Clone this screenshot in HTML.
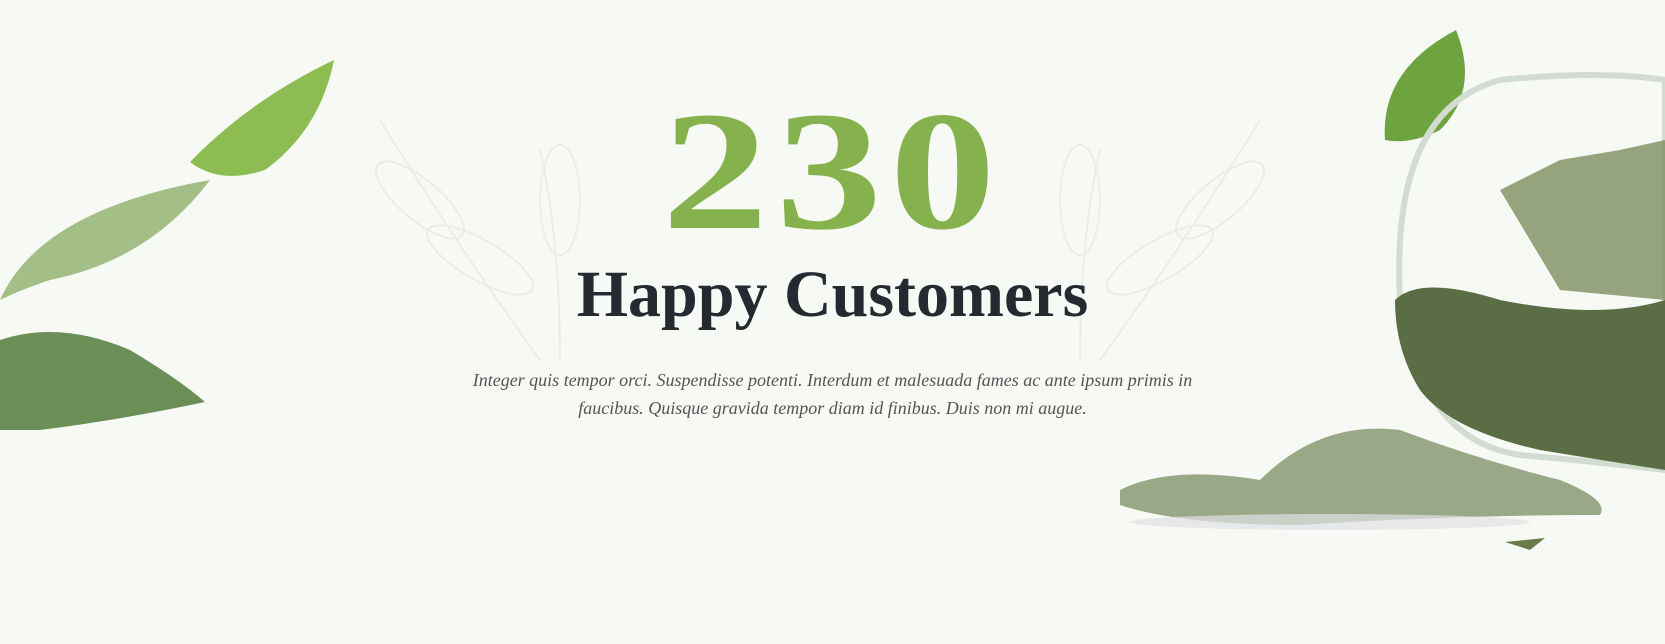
<!DOCTYPE html>
<html><head><meta charset="utf-8"><style>
html,body{margin:0;padding:0}
body{width:1665px;height:644px;background:#f7f9f5;position:relative;overflow:hidden;font-family:"Liberation Serif",serif}
.num{position:absolute;left:0;width:1665px;top:86px;text-align:center;font-size:170px;font-weight:bold;color:#86b24e;line-height:1;letter-spacing:6px;transform:scaleX(1.25);transform-origin:832px 0}
.h{position:absolute;left:0;width:1665px;top:262px;text-align:center;font-size:66px;font-weight:bold;color:#232a30;line-height:1}
.p{position:absolute;left:400px;width:865px;top:366px;text-align:center;font-size:18px;font-style:italic;color:#555;line-height:28px}
svg{position:absolute;left:0;top:0}
</style></head><body>
<svg width="1665" height="644">
<g fill="none" stroke="#eaede7" stroke-width="2">
<path d="M540 360 Q460 250 380 120"/><path d="M560 360 Q560 240 540 150"/><path d="M1100 360 Q1180 250 1260 120"/><path d="M1080 360 Q1080 240 1100 150"/>
<ellipse cx="420" cy="200" rx="55" ry="20" transform="rotate(40 420 200)"/><ellipse cx="480" cy="260" rx="60" ry="20" transform="rotate(30 480 260)"/>
<ellipse cx="1220" cy="200" rx="55" ry="20" transform="rotate(-40 1220 200)"/><ellipse cx="1160" cy="260" rx="60" ry="20" transform="rotate(-30 1160 260)"/>
<ellipse cx="560" cy="200" rx="20" ry="55"/><ellipse cx="1080" cy="200" rx="20" ry="55"/>
</g>
<path d="M190 162 Q250 100 334 60 Q320 130 265 170 Q220 185 190 162Z" fill="#8dbd52"/>
<path d="M0 300 Q40 210 210 180 Q150 260 50 280 Q20 290 0 300Z" fill="#a3be86"/>
<path d="M0 340 Q60 320 130 350 Q180 380 205 402 Q120 420 40 430 L0 430Z" fill="#6c8f57"/>
<path d="M1385 140 Q1380 70 1456 30 Q1480 90 1440 130 Q1410 145 1385 140Z" fill="#6da440"/>
<path d="M1400 300 Q1390 110 1500 80 Q1600 70 1665 80 L1665 470 Q1580 460 1520 455 Q1420 440 1400 300Z" fill="none" stroke="#d3dcd0" stroke-width="6"/>
<path d="M1500 190 L1560 160 L1620 150 L1665 140 L1665 300 L1560 290 Z" fill="#7c8f5e" opacity="0.8"/>
<path d="M1395 300 Q1420 275 1500 300 Q1600 320 1665 300 L1665 470 Q1600 460 1540 450 Q1450 430 1420 390 Q1395 350 1395 300Z" fill="#5b6d44"/>
<path d="M1120 490 Q1170 465 1260 480 Q1320 420 1400 430 Q1480 460 1560 480 Q1610 500 1600 515 Q1450 515 1300 525 Q1180 525 1120 505Z" fill="#99a886"/>
<ellipse cx="1330" cy="522" rx="200" ry="8" fill="#e0e1e6" opacity="0.7"/>
<path d="M1505 542 L1545 538 L1530 550Z" fill="#6b7a4a"/>
</svg>
<div class="num">230</div>
<div class="h">Happy Customers</div>
<div class="p">Integer quis tempor orci. Suspendisse potenti. Interdum et malesuada fames ac ante ipsum primis in<br>faucibus. Quisque gravida tempor diam id finibus. Duis non mi augue.</div>
</body></html>
